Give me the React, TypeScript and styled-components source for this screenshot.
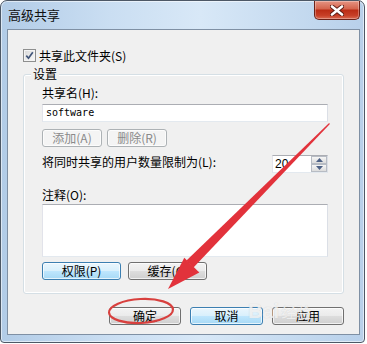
import React from "react";
import styled, { createGlobalStyle, css } from "styled-components";

const GlobalStyle = createGlobalStyle`
  body {
    margin: 0;
    background: #ffffff;
    font-family: "Noto Sans CJK SC", "Noto Sans", sans-serif;
    font-size: 12px;
    color: #000;
  }
`;

const Screen = styled.div`
  position: relative;
  width: 367px;
  height: 344px;
  overflow: hidden;
`;

const Window = styled.div`
  box-sizing: border-box;
  width: 365px;
  height: 343px;
  border: 1px solid #4d5866;
  border-radius: 7px 7px 4px 4px;
  background: linear-gradient(90deg, #b2cce7 0%, #cadef2 30%, #d8e8f7 55%, #c6dbf0 80%, #b8d0ea 100%);
  box-shadow: inset 0 0 0 1px rgba(255, 255, 255, 0.55);
  padding: 0 4px 7px 6px;
  display: flex;
  flex-direction: column;
`;

const TitleBar = styled.div`
  height: 28px;
  display: flex;
  justify-content: space-between;
  align-items: flex-start;
`;

const Title = styled.div`
  margin: 6px 0 0 1px;
  font-size: 13px;
  line-height: 16px;
  color: #101010;
`;

const CloseButton = styled.div`
  box-sizing: border-box;
  width: 46px;
  height: 19px;
  border: 1px solid #6b2219;
  border-top: none;
  border-radius: 0 0 5px 5px;
  background: linear-gradient(#e59483 0%, #d5664f 42%, #bb2d16 52%, #c73f27 80%, #d96a52 100%);
  box-shadow: inset 0 0 0 1px rgba(255, 255, 255, 0.3);
  display: flex;
  align-items: center;
  justify-content: center;
`;

const Client = styled.div`
  box-sizing: border-box;
  flex: 1;
  border: 1px solid #7f90a4;
  background: #f0f0f0;
  padding: 19px 15px 9px 15px;
  display: flex;
  flex-direction: column;
`;

const CheckRow = styled.label`
  display: flex;
  align-items: center;
  gap: 3px;
  height: 13px;
  line-height: 14px;
`;

const CheckBox = styled.span`
  box-sizing: border-box;
  width: 13px;
  height: 13px;
  border: 1px solid #8e8f8f;
  background: linear-gradient(135deg, #d8d8d8, #fafafa);
  box-shadow: inset 0 0 0 1px #f4f4f4;
  display: flex;
  align-items: center;
  justify-content: center;
`;

const GroupBox = styled.div`
  position: relative;
  margin-top: 12px;
  border: 1px solid #d5dfe5;
  border-radius: 3px;
  box-shadow: inset 0 0 0 1px #ffffff;
  padding: 11px 15px 13px 18px;
  display: flex;
  flex-direction: column;
`;

const GroupLabel = styled.span`
  position: absolute;
  top: -8px;
  left: 7px;
  padding: 0 2px;
  background: #f0f0f0;
  line-height: 14px;
`;

const Label = styled.div<{ $gap?: number }>`
  line-height: 14px;
  margin-top: ${(p) => p.$gap ?? 0}px;
`;

const fieldBorder = css`
  box-sizing: border-box;
  border: 1px solid;
  border-color: #abadb3 #dbdfe6 #e3e9ef #e2e3ea;
  background: #ffffff;
`;

const TextField = styled.div`
  ${fieldBorder};
  height: 18px;
  margin-top: 4px;
  padding: 0 3px;
  font-family: "DejaVu Sans Mono", "Liberation Mono", monospace;
  font-size: 10px;
  line-height: 16px;
`;

const TextArea = styled.div`
  ${fieldBorder};
  height: 53px;
  margin-top: 2px;
`;

const ButtonRow = styled.div<{ $gap: number; $top: number }>`
  display: flex;
  gap: ${(p) => p.$gap}px;
  margin-top: ${(p) => p.$top}px;
`;

const Footer = styled.div`
  display: flex;
  justify-content: flex-end;
  gap: 9px;
  margin-top: 13px;
`;

type Variant = "normal" | "hot" | "disabled";

const Button = styled.div<{ $w: number; $variant?: Variant }>`
  box-sizing: border-box;
  width: ${(p) => p.$w}px;
  height: 18px;
  border-radius: 3px;
  display: flex;
  align-items: center;
  justify-content: center;
  line-height: 14px;
  border: 1px solid #707070;
  box-shadow: inset 0 0 0 1px rgba(255, 255, 255, 0.7);
  background: linear-gradient(#f3f3f3 0%, #ebebeb 48%, #dddddd 52%, #cfcfcf 100%);
  ${(p) =>
    p.$variant === "hot" &&
    css`
      border-color: #3c7fb1;
      background: linear-gradient(#eaf6fd 0%, #d9f0fc 48%, #bee6fd 52%, #a7d9f5 100%);
    `}
  ${(p) =>
    p.$variant === "disabled" &&
    css`
      border-color: #adb2b5;
      color: #8a8a8a;
      background: #f4f4f4;
    `}
`;

const LimitRow = styled.div`
  display: flex;
  justify-content: space-between;
  align-items: flex-start;
  margin-top: 8px;
  height: 18px;
`;

const Spinner = styled.div`
  ${fieldBorder};
  width: 56px;
  height: 18px;
  display: flex;
  padding: 0 0 0 2px;
`;

const SpinValue = styled.span`
  flex: 1;
  line-height: 16px;
  font-family: "Liberation Sans", sans-serif;
  font-size: 12px;
`;

const SpinButtons = styled.div`
  width: 16px;
  display: flex;
  flex-direction: column;
`;

const SpinHalf = styled.div`
  box-sizing: border-box;
  flex: 1;
  border: 1px solid #b7bcc4;
  background: linear-gradient(#f6f6f6, #dcdcdc);
  display: flex;
  align-items: center;
  justify-content: center;
`;

const Overlay = styled.svg`
  position: absolute;
  left: 0;
  top: 0;
  pointer-events: none;
`;

const Watermark = styled.div`
  position: absolute;
  left: 248px;
  top: 300px;
  display: flex;
  align-items: baseline;
  gap: 2px;
  color: rgba(255, 255, 255, 0.7);
  text-shadow: 0 0 1px rgba(160, 160, 160, 0.45);
  pointer-events: none;
`;

const MarkLatin = styled.span`
  font-family: "Liberation Sans", sans-serif;
  font-size: 20px;
  font-weight: bold;
`;

const MarkCjk = styled.span`
  font-size: 15px;
`;

const Tri = ({ up }: { up?: boolean }) => (
  <svg width="7" height="4" viewBox="0 0 7 4">
    <path d={up ? "M0 4 L3.5 0 L7 4 Z" : "M0 0 L3.5 4 L7 0 Z"} fill="#4d6185" />
  </svg>
);

export default function App() {
  return (
    <Screen>
      <GlobalStyle />
      <Window>
        <TitleBar>
          <Title>高级共享</Title>
          <CloseButton>
            <svg width="14" height="11" viewBox="0 0 14 11">
              <path d="M2 1.5 L12 9.5 M12 1.5 L2 9.5" stroke="#5a1a12" strokeWidth="4.4" strokeLinecap="round" />
              <path d="M2 1.5 L12 9.5 M12 1.5 L2 9.5" stroke="#ffffff" strokeWidth="2.6" strokeLinecap="round" />
            </svg>
          </CloseButton>
        </TitleBar>
        <Client>
          <CheckRow>
            <CheckBox>
              <svg width="9" height="9" viewBox="0 0 9 9">
                <path d="M1.3 4.6 L3.5 7.2 L7.8 1.3" fill="none" stroke="#41557a" strokeWidth="1.7" />
              </svg>
            </CheckBox>
            共享此文件夹(S)
          </CheckRow>
          <GroupBox>
            <GroupLabel>设置</GroupLabel>
            <Label>共享名(H):</Label>
            <TextField>software</TextField>
            <ButtonRow $gap={5} $top={7}>
              <Button $w={60} $variant="disabled">添加(A)</Button>
              <Button $w={60} $variant="disabled">删除(R)</Button>
            </ButtonRow>
            <LimitRow>
              <Label>将同时共享的用户数量限制为(L):</Label>
              <Spinner>
                <SpinValue>20</SpinValue>
                <SpinButtons>
                  <SpinHalf>
                    <Tri up />
                  </SpinHalf>
                  <SpinHalf>
                    <Tri />
                  </SpinHalf>
                </SpinButtons>
              </Spinner>
            </LimitRow>
            <Label $gap={15}>注释(O):</Label>
            <TextArea />
            <ButtonRow $gap={7} $top={5}>
              <Button $w={79} $variant="hot">权限(P)</Button>
              <Button $w={79}>缓存(C)</Button>
            </ButtonRow>
          </GroupBox>
          <Footer>
            <Button $w={72}>确定</Button>
            <Button $w={73} $variant="hot">取消</Button>
            <Button $w={72}>应用</Button>
          </Footer>
        </Client>
      </Window>
      <Watermark>
        <MarkLatin>Bai</MarkLatin>
        <MarkCjk>经验</MarkCjk>
      </Watermark>
      <Overlay width="367" height="344" viewBox="0 0 367 344">
        <polygon
          points="329.9,123.9 329.1,123.1 186.5,260.5 193.5,267.5"
          fill="#e2323b"
        />
        <polygon points="168,289 184.3,257.7 199.3,272.5" fill="#e2323b" />
        <ellipse
          cx="141"
          cy="311"
          rx="32"
          ry="12"
          fill="none"
          stroke="#d8403e"
          strokeWidth="2.2"
          transform="rotate(-3 141 311)"
        />
      </Overlay>
    </Screen>
  );
}
